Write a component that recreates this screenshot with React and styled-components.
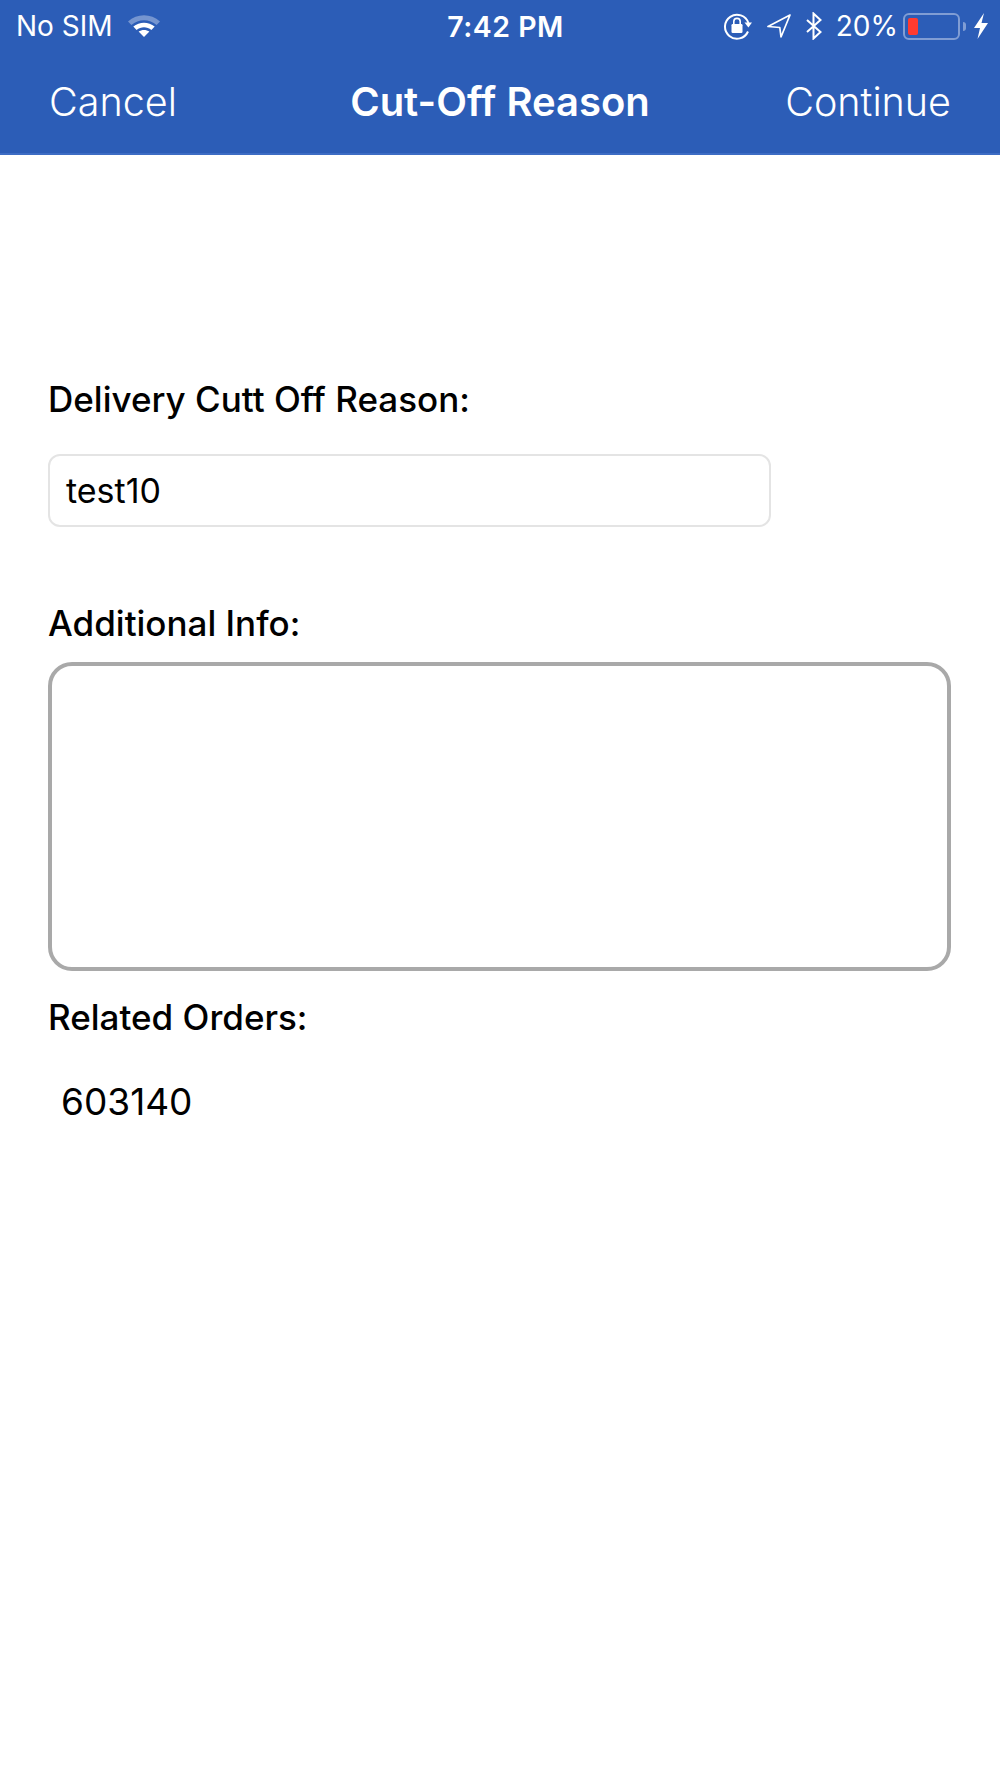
import React from 'react'
import styled, { createGlobalStyle } from 'styled-components'

const GlobalStyle = createGlobalStyle`
html,body{
    margin:0;
    padding:0;
    background:#fff;
}
body{
    font-family:"Inter","Liberation Sans",sans-serif;
}
`

function WifiIcon() {
    return (
        <svg width="34" height="25" viewBox="0 0 34 25">
            <path d="M1 9.5C10 1.2 24 1.2 33 9.5L29.6 13C22.4 6.6 11.6 6.6 4.4 13Z" fill="#fff" opacity="0.35" />
            <path d="M6.3 14.6C12.5 9.4 21.5 9.4 27.7 14.6L24.4 17.9C20 14.4 14 14.4 9.6 17.9Z" fill="#fff" />
            <path d="M11.6 19.6C14.8 17.4 19.2 17.4 22.4 19.6L17 25Z" fill="#fff" />
        </svg>
    )
}

function RotationLockIcon() {
    return (
        <svg width="30" height="28" viewBox="0 0 30 28">
            <path d="M25 19.5A12 12 0 1 1 25.4 11" fill="none" stroke="#fff" strokeWidth="2" />
            <path d="M21.5 10.5L29 10.5L25.4 15.5Z" fill="#fff" />
            <rect x="8.5" y="12" width="11" height="9" rx="1.2" fill="#fff" />
            <path d="M10.8 12V9.6a3.2 3.2 0 0 1 6.4 0V12" fill="none" stroke="#fff" strokeWidth="1.6" />
        </svg>
    )
}

function LocationIcon() {
    return (
        <svg width="24" height="24" viewBox="0 0 24 24">
            <path d="M23 1L1 12.5L12.8 13.5L14 23Z" fill="none" stroke="#fff" strokeWidth="1.7" strokeLinejoin="round" />
        </svg>
    )
}

function BluetoothIcon() {
    return (
        <svg width="18" height="28" viewBox="0 0 18 28">
            <path d="M2 8L15.5 20L8.5 26.5V1.5L15.5 8L2 20" fill="none" stroke="#fff" strokeWidth="2" />
        </svg>
    )
}

function BoltIcon() {
    return (
        <svg width="16" height="26" viewBox="0 0 16 26">
            <path d="M11 0L1 15H7L4.5 26L15 10H8.5Z" fill="#fff" />
        </svg>
    )
}

function App() {
    return (
        <Page>
            <GlobalStyle />
            <Header>
                <StatusBar>
                    <StatusLeft>
                        <StatusText>No SIM</StatusText>
                        <WifiSlot><WifiIcon /></WifiSlot>
                    </StatusLeft>
                    <StatusTime>7:42 PM</StatusTime>
                    <StatusRight>
                        <RotationLockIcon />
                        <LocationSlot><LocationIcon /></LocationSlot>
                        <BluetoothSlot><BluetoothIcon /></BluetoothSlot>
                        <StatusText>20%</StatusText>
                        <BatteryWrap>
                            <Battery><BatteryFill /></Battery>
                            <BatteryCap />
                        </BatteryWrap>
                        <BoltIcon />
                    </StatusRight>
                </StatusBar>
                <NavBar>
                    <NavButton>Cancel</NavButton>
                    <NavTitle>Cut-Off Reason</NavTitle>
                    <NavButton $right>Continue</NavButton>
                </NavBar>
            </Header>
            <Content>
                <Label>Delivery Cutt Off Reason:</Label>
                <ReasonInput>test10</ReasonInput>
                <InfoLabel>Additional Info:</InfoLabel>
                <InfoBox />
                <OrdersLabel>Related Orders:</OrdersLabel>
                <OrderNumber>603140</OrderNumber>
            </Content>
        </Page>
    )
}

const Page = styled.div`
width:1000px;
height:1778px;
background:#fff;
overflow:hidden;
`
const Header = styled.div`
height:153px;
background:#2c5db7;
border-bottom:2px solid #3d6cc4;
color:#fff;
`
const StatusBar = styled.div`
height:52px;
padding:0 11px 0 16px;
display:grid;
grid-template-columns:1fr auto 1fr;
align-items:center;
`
const StatusLeft = styled.div`
display:flex;
align-items:center;
gap:14px;
`
const WifiSlot = styled.span`
display:flex;
margin-bottom:4px;
`
const StatusText = styled.span`
font-size:28px;
`
const StatusTime = styled.span`
margin-left:6px;
font-size:28.5px;
font-weight:600;
letter-spacing:0.5px;
`
const StatusRight = styled.div`
display:flex;
align-items:center;
justify-content:flex-end;
gap:6px;
`
const LocationSlot = styled.span`
display:flex;
margin:0 8px;
`
const BluetoothSlot = styled.span`
display:flex;
margin-right:7px;
`
const BatteryWrap = styled.div`
display:flex;
align-items:center;
margin:0 1px 0 -1px;
gap:3px;
`
const Battery = styled.div`
width:57px;
height:27px;
box-sizing:border-box;
padding:3px;
border:2px solid rgba(255,255,255,0.4);
border-radius:6px;
`
const BatteryFill = styled.div`
width:10px;
height:100%;
background:#ff3b30;
border-radius:2px;
`
const BatteryCap = styled.div`
width:3px;
height:9px;
background:rgba(255,255,255,0.4);
border-radius:0 3px 3px 0;
`
const NavBar = styled.div`
height:101px;
padding:0 49px 2px 49px;
box-sizing:border-box;
display:grid;
grid-template-columns:1fr auto 1fr;
align-items:center;
`
const NavButton = styled.span`
font-size:39.5px;
font-weight:300;
text-align:${props => props.$right ? 'right' : 'left'};
`
const NavTitle = styled.span`
font-size:40px;
font-weight:600;
`
const Content = styled.div`
padding:224px 49px 0 48px;
display:flex;
flex-direction:column;
align-items:flex-start;
`
const Label = styled.div`
font-size:35px;
line-height:40px;
font-weight:500;
color:#000;
`
const ReasonInput = styled.div`
width:723px;
height:73px;
box-sizing:border-box;
margin-top:35px;
padding-left:16px;
display:flex;
align-items:center;
border:2px solid #e4e4e4;
border-radius:12px;
font-size:34px;
color:#000;
`
const InfoLabel = styled(Label)`
margin-top:76px;
`
const InfoBox = styled.div`
width:903px;
height:309px;
box-sizing:border-box;
margin-top:19px;
border:4px solid #a9a9a9;
border-radius:24px;
`
const OrdersLabel = styled(Label)`
margin-top:26px;
`
const OrderNumber = styled.div`
margin-top:45px;
margin-left:13px;
font-size:37px;
line-height:40px;
color:#000;
`

export default App
